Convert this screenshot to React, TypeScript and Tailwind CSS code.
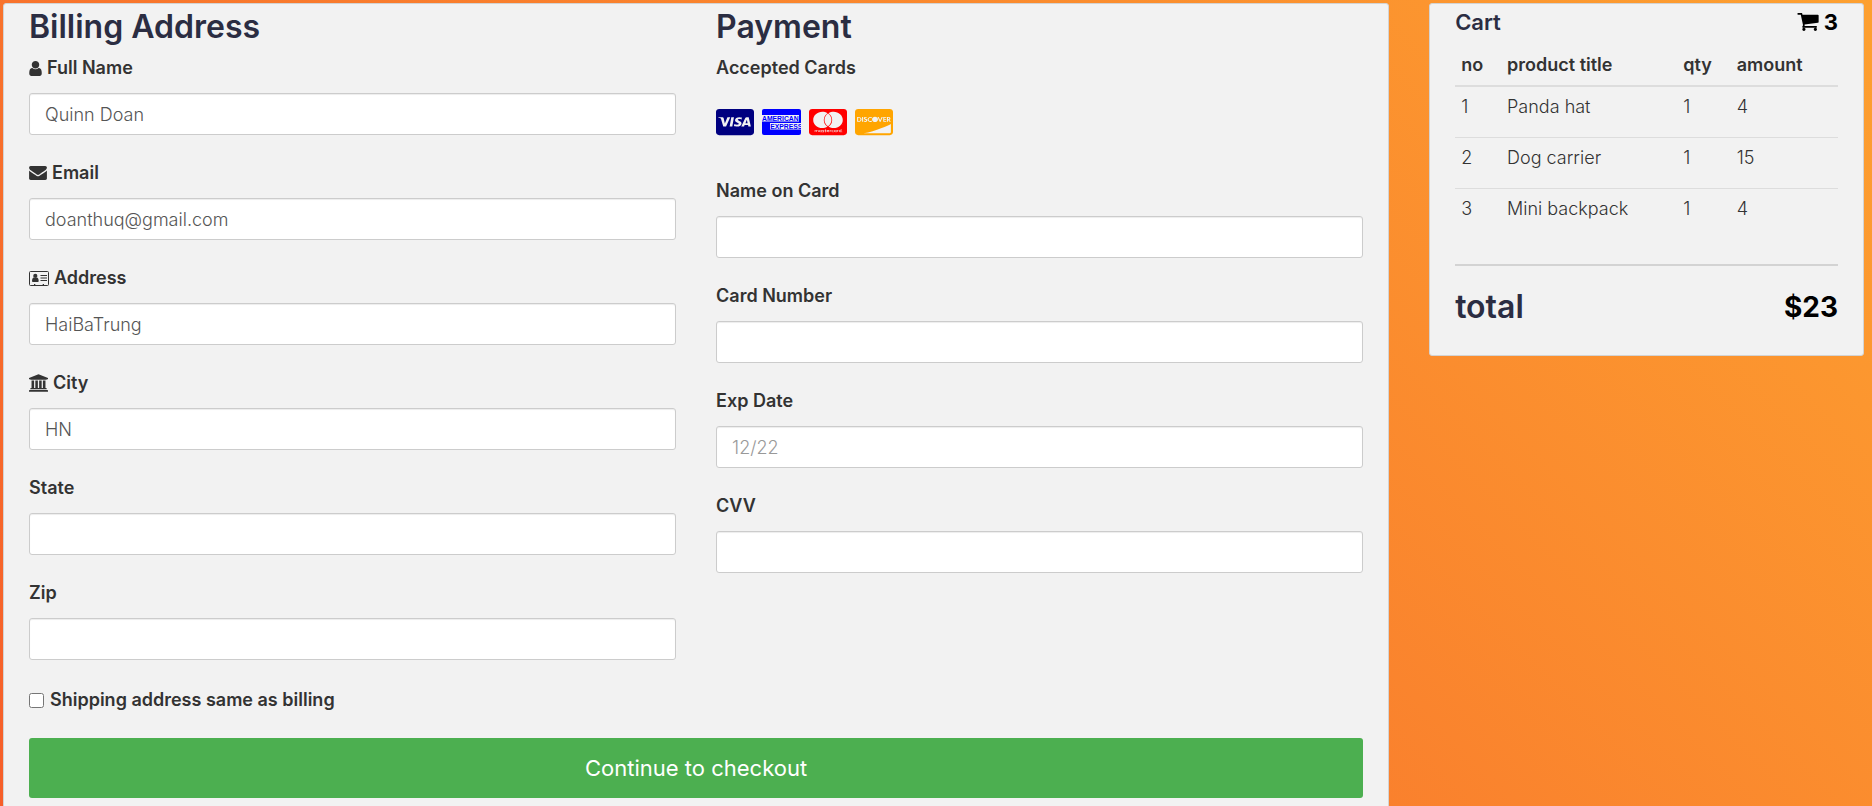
import type { ReactNode } from "react";
import { FaCcDiscover, FaCcMastercard, FaCcVisa } from "react-icons/fa";

function UserIcon() {
  return (
    <svg viewBox="256 128 1280 1536" className="h-[15px] w-[13px] fill-current" aria-hidden="true">
      <path d="M1536 1399q0 109-62.5 187t-150.5 78h-854q-88 0-150.5-78t-62.5-187q0-85 8.5-160.5t31.5-152 58.5-131 94-89 134.5-34.5q131 128 313 128t313-128q76 0 134.5 34.5t94 89 58.5 131 31.5 152 8.5 160.5zm-256-887q0 159-112.5 271.5t-271.5 112.5-271.5-112.5-112.5-271.5 112.5-271.5 271.5-112.5 271.5 112.5 112.5 271.5z" />
    </svg>
  );
}

function EnvelopeIcon() {
  return (
    <svg viewBox="0 256 1792 1408" className="h-[14px] w-[18px] fill-current" aria-hidden="true">
      <path d="M1792 710v794q0 66-47 113t-113 47h-1472q-66 0-113-47t-47-113v-794q44 49 101 87 362 246 497 345 57 42 92.5 65.5t94.5 48 110 24.5h2q51 0 110-24.5t94.5-48 92.5-65.5q170-123 498-345 57-39 100-87zm0-294q0 79-49 151t-122 123q-376 261-468 325-10 7-42.5 31t-54 38.5-52 32.5-57.5 27-50 9h-2q-23 0-50-9t-57.5-27-52-32.5-54-38.5-42.5-31q-91-64-262-182.5t-205-142.5q-62-42-117-115.5t-55-136.5q0-78 41.5-130t118.5-52h1472q65 0 112.5 47t47.5 113z" />
    </svg>
  );
}

function AddressCardIcon() {
  return (
    <svg viewBox="0 0 20 15" className="h-[15px] w-5 fill-current" aria-hidden="true">
      <rect x="0.5" y="0.5" width="19" height="14" rx="1" fill="none" stroke="currentColor" />
      <circle cx="6.3" cy="4.9" r="2.1" />
      <path d="M3 10.2c0-2.4.8-3.7 2-3.8.8.7 1.9.7 2.7 0 1.2.1 2 1.4 2 3.8 0 .5-.4.8-.9.8H3.9c-.5 0-.9-.3-.9-.8z" />
      <path d="M11.5 4h6.5v1h-6.5zM11.5 6.5h6.5v1h-6.5zM11.5 9h6.5v1h-6.5z" />
      <path d="M5 13h1.3v1.3H5zM13.7 13H15v1.3h-1.3z" />
    </svg>
  );
}

function BankIcon() {
  return (
    <svg viewBox="0 0 1920 1792" className="h-[18px] w-[19px] fill-current" aria-hidden="true">
      <path d="M960 0l960 384v128h-128q0 26-20.5 45t-48.5 19h-1526q-28 0-48.5-19t-20.5-45h-128v-128zm-704 640h256v768h128v-768h256v768h128v-768h256v768h128v-768h256v768h59q28 0 48.5 19t20.5 45v64h-1664v-64q0-26 20.5-45t48.5-19h59v-768zm1595 960q28 0 48.5 19t20.5 45v128h-1920v-128q0-26 20.5-45t48.5-19h1782z" />
    </svg>
  );
}

function CartIcon() {
  return (
    <svg viewBox="64 256 1664 1408" className="h-[18px] w-[22px] fill-current" aria-hidden="true">
      <path d="M704 1536q0 52-38 90t-90 38-90-38-38-90 38-90 90-38 90 38 38 90zm896 0q0 52-38 90t-90 38-90-38-38-90 38-90 90-38 90 38 38 90zm128-1088v512q0 24-16.5 42.5t-40.5 21.5l-1044 122q13 60 13 70 0 16-24 64h920q26 0 45 19t19 45-19 45-45 19h-1024q-26 0-45-19t-19-45q0-11 8-31.5t16-36 21.5-40 15.5-29.5l-177-823h-204q-26 0-45-19t-19-45 19-45 45-19h256q16 0 28.5 6.5t19.5 15.5 13 24.5 8 26 5.5 29.5 4.5 26h1201q26 0 45 19t19 45z" />
    </svg>
  );
}

function AmexCard() {
  return (
    <svg viewBox="0 0 39 26" className="h-[26px] w-[39px]" role="img" aria-label="American Express">
      <rect width="39" height="26" rx="2" fill="#0000ff" />
      <rect x="0" y="6" width="37" height="6.5" fill="#f2f2f2" />
      <rect x="8" y="14" width="31" height="6.5" fill="#f2f2f2" />
      <g fill="#0000ff" fontFamily="Liberation Sans, sans-serif" fontWeight="700" fontSize="6.8">
        <text x="0" y="11.7">AMERICAN</text>
        <text x="8.2" y="19.7">EXPRESS</text>
      </g>
    </svg>
  );
}

type FieldProps = {
  id: string;
  label: string;
  icon?: ReactNode;
  value?: string;
  placeholder?: string;
};

function Field({ id, label, icon, value, placeholder }: FieldProps) {
  return (
    <div className="mb-5">
      <label htmlFor={id} className="mb-[7px] flex h-9 items-center gap-[5px] font-semibold">
        {icon}
        {label}
      </label>
      <input
        id={id}
        type="text"
        defaultValue={value}
        placeholder={placeholder}
        className="block h-[42px] w-full rounded-[3px] border border-[#ccc] bg-white px-[15px] font-light text-[#555] shadow-[inset_0_1px_1px_rgba(0,0,0,0.075)] placeholder:text-[#999]"
      />
    </div>
  );
}

const items = [
  { no: 1, title: "Panda hat", qty: 1, amount: 4 },
  { no: 2, title: "Dog carrier", qty: 1, amount: 15 },
  { no: 3, title: "Mini backpack", qty: 1, amount: 4 },
];

export default function App() {
  return (
    <div className="min-h-screen bg-[linear-gradient(45deg,#f65f2a,#fda030)] pt-[3px] pr-2 pl-[3px] font-[Inter,'Open_Sans',sans-serif] text-lg leading-6 text-[#333]">
      <main className="grid items-start gap-10 lg:grid-cols-[51fr_16fr]">
        <form
          className="rounded-[3px] border border-[#d3d3d3] bg-[#f2f2f2] px-[25px] pt-[5px]"
          onSubmit={(event) => event.preventDefault()}
        >
          <div className="grid gap-x-10 md:grid-cols-2">
            <section>
              <h2 className="flex h-9 items-center text-[32px] font-semibold text-[#2b2d42]">
                Billing Address
              </h2>
              <div className="pt-[5px]">
                <Field id="name" label="Full Name" icon={<UserIcon />} value="Quinn Doan" />
                <Field id="email" label="Email" icon={<EnvelopeIcon />} value="doanthuq@gmail.com" />
                <Field id="address" label="Address" icon={<AddressCardIcon />} value="HaiBaTrung" />
                <Field id="city" label="City" icon={<BankIcon />} value="HN" />
                <Field id="state" label="State" />
                <Field id="zip" label="Zip" />
              </div>
            </section>

            <section>
              <h2 className="flex h-9 items-center text-[32px] font-semibold text-[#2b2d42]">
                Payment
              </h2>
              <div className="pt-[5px]">
                <p className="flex h-9 items-center font-semibold">Accepted Cards</p>
                <div className="mt-5 mb-[35px] flex h-8 items-center gap-2">
                  <FaCcVisa title="Visa" preserveAspectRatio="none" className="h-[30px] w-[38px] text-[#000080]" />
                  <AmexCard />
                  <FaCcMastercard title="Mastercard" preserveAspectRatio="none" className="h-[30px] w-[38px] text-[#ff0000]" />
                  <FaCcDiscover title="Discover" preserveAspectRatio="none" className="h-[30px] w-[38px] text-[#ffa500]" />
                </div>
                <Field id="card-name" label="Name on Card" />
                <Field id="card-number" label="Card Number" />
                <Field id="expiry" label="Exp Date" placeholder="12/22" />
                <Field id="cvv" label="CVV" />
              </div>
            </section>
          </div>

          <label className="flex h-10 items-center gap-[6px] font-semibold">
            <input type="checkbox" className="size-[15px]" />
            Shipping address same as billing
          </label>
          <button
            type="submit"
            className="mt-[18px] mb-[10px] block h-[60px] w-full rounded-[3px] bg-[#4caf50] text-[22px] font-normal text-white"
          >
            Continue to checkout
          </button>
        </form>

        <aside className="rounded-[3px] border border-[#d3d3d3] bg-[#f2f2f2] px-[25px] pt-[5px] pb-[28px]">
          <div className="flex h-[26px] items-center justify-between text-[22px] font-semibold">
            <h4 className="text-[#2b2d42]">Cart</h4>
            <span className="flex items-center gap-[5px] font-bold text-black">
              <CartIcon />3
            </span>
          </div>
          <table className="mt-[10px] w-full text-left">
            <thead>
              <tr className="h-[41px] border-b-2 border-[#ddd]">
                <th className="w-[12%] px-[6px] font-semibold">no</th>
                <th className="w-[46%] px-[6px] font-semibold">product title</th>
                <th className="w-[14%] px-[6px] font-semibold">qty</th>
                <th className="w-[28%] px-[6px] font-semibold">amount</th>
              </tr>
            </thead>
            <tbody>
              {items.map((item) => (
                <tr key={item.no} className="h-[51px] border-t border-[#ddd] align-top font-light">
                  <td className="px-[6px] pt-2">{item.no}</td>
                  <td className="px-[6px] pt-2">{item.title}</td>
                  <td className="px-[6px] pt-2">{item.qty}</td>
                  <td className="px-[6px] pt-2">{item.amount}</td>
                </tr>
              ))}
            </tbody>
          </table>
          <hr className="mt-[25px] border-t-2 border-[#d3d3d3]" />
          <div className="mt-[21px] flex h-10 items-center justify-between font-semibold">
            <h2 className="text-[32px] text-[#2b2d42]">total</h2>
            <span className="text-[28px] font-bold text-black">$23</span>
          </div>
        </aside>
      </main>
    </div>
  );
}
